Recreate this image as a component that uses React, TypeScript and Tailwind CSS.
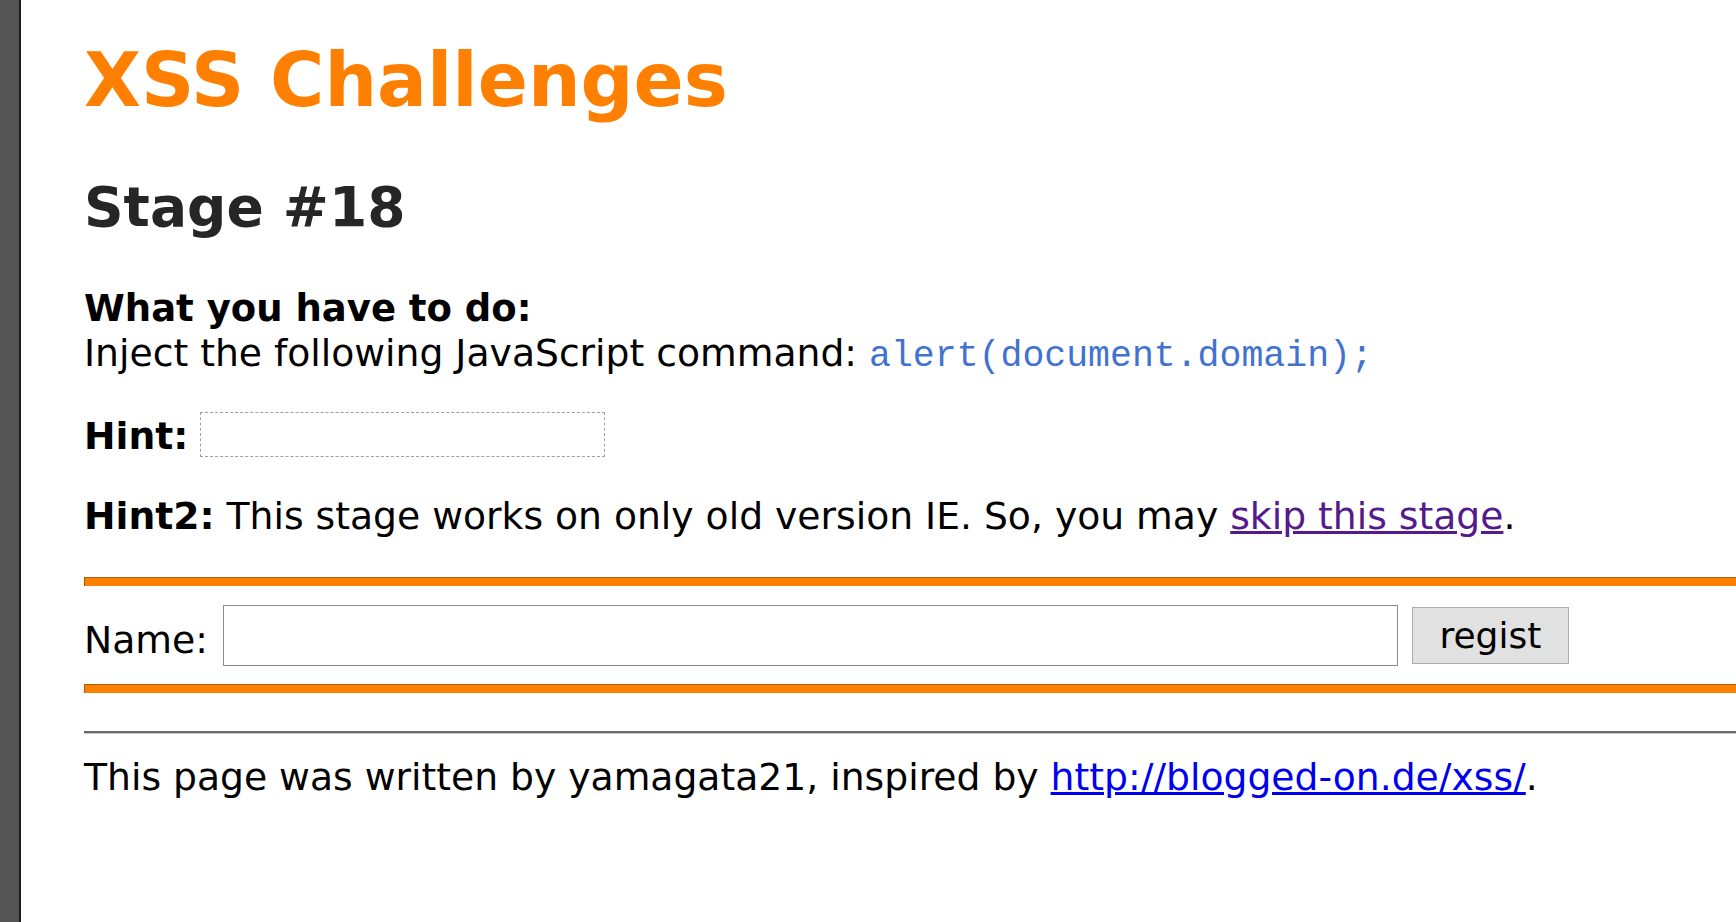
export default function App() {
  return (
    <div className="flex h-[922px] w-full overflow-hidden bg-white font-['DejaVu_Sans',sans-serif] text-black">
      {/* window edge */}
      <div className="w-[19px] shrink-0 bg-[#555555]" />
      <div className="w-[2px] shrink-0 bg-[#1c1c1c]" />

      <div className="flex-1 pl-[63px]">
        <h1 className="mt-[40px] text-[74px] leading-[80px] font-bold text-[#ff7f00]">
          XSS Challenges
        </h1>

        <h2 className="mt-[55px] text-[55px] leading-[64px] font-bold text-[#262626]">
          Stage #18
        </h2>

        <div className="mt-[47px] text-[37.7px] leading-[45px]">
          <div className="text-[37px] font-bold">What you have to do:</div>
          <div>
            Inject the following JavaScript command:{" "}
            <code className="font-['Liberation_Mono',monospace] text-[36.5px] text-[#4272d0]">
              alert(document.domain);
            </code>
          </div>
        </div>

        <div className="mt-[33px] flex items-start">
          <span className="mt-[2px] text-[37.7px] leading-[45px] font-bold">Hint:</span>
          <span className="ml-[12px] h-[45px] w-[405px] border border-dashed border-[#a0a0a0]" />
        </div>

        <p className="mt-[35px] text-[37.7px] leading-[45px]">
          <b>Hint2:</b> This stage works on only old version IE. So, you may{" "}
          <a href="#" className="text-[#551a8b] underline">
            skip this stage
          </a>
          .
        </p>

        <div className="mt-[38px] h-[9px] border-t border-l border-[#a85c12] bg-[#ff7f00]" />

        <form className="mt-[19px] flex items-start" onSubmit={(e) => e.preventDefault()}>
          <span className="mt-[13px] text-[37.7px] leading-[45px]">Name:</span>
          <input
            type="text"
            className="ml-[15px] h-[61px] w-[1175px] border border-[#8a8a8a] bg-white outline-none"
          />
          <button
            type="submit"
            className="mt-[2px] ml-[14px] h-[57px] w-[157px] border border-[#adadad] bg-[#e1e1e1] text-[36px] leading-none"
          >
            regist
          </button>
        </form>

        <div className="mt-[18px] h-[9px] border-t border-l border-[#a85c12] bg-[#ff7f00]" />

        <div className="mt-[38px] h-[3px] border-t-2 border-[#6a6a6a] bg-[#c8c8c8]" />

        <p className="mt-[21px] text-[37.7px] leading-[45px]">
          This page was written by yamagata21, inspired by{" "}
          <a href="#" className="text-[#0000ee] underline">
            http://blogged-on.de/xss/
          </a>
          .
        </p>
      </div>
    </div>
  );
}
